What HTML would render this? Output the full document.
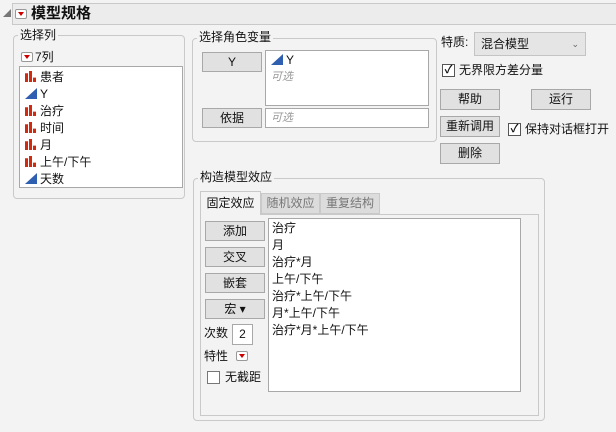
<!DOCTYPE html>
<html><head><meta charset="utf-8"><style>
*{margin:0;padding:0;box-sizing:border-box}
body{width:616px;height:432px;background:#f3f3f3;font-family:"Liberation Sans","Noto Sans CJK SC",sans-serif;font-size:12px;color:#111;position:relative;overflow:hidden}
.a{position:absolute}
.grp{position:absolute;border:1px solid #c9c9c9;border-radius:4px}
.lbl{position:absolute;background:#f3f3f3;padding:0 2px;line-height:14px}
.btn{position:absolute;background:#e1e1e1;border:1px solid #a8a8a8;text-align:center;line-height:18px;font-size:12px}
.box{position:absolute;background:#fff;border:1px solid #a8a8a8}
.rb{position:absolute;width:12px;height:10px;border:1px solid #999;border-radius:2px;background:#fff}
.rb:after{content:"";position:absolute;left:2px;top:2px;border-left:3px solid transparent;border-right:3px solid transparent;border-top:4px solid #c00}
.it{position:absolute;left:5px;line-height:17px;white-space:nowrap}
.bar{display:inline-block;width:11px;height:11px;vertical-align:-1px;margin-right:4px;background:linear-gradient(to right,#d02a10 0 3px,transparent 3px 4px,#d02a10 4px 7px,transparent 7px 8px,#d02a10 8px 11px);clip-path:polygon(0 20%,3px 20%,3px 0,7px 0,7px 45%,8px 45%,8px 60%,11px 60%,11px 100%,0 100%)}
.tri{display:inline-block;width:12px;height:11px;vertical-align:-1px;margin-right:3px;background:#2f5fb0;clip-path:polygon(0 100%,100% 0,100% 100%)}
.cb{position:absolute;width:13px;height:13px;border:1px solid #555;background:#fff;font-size:11px;line-height:11px;text-align:center;font-weight:bold}
</style></head><body>
<div class="a" style="left:3px;top:9px;width:0;height:0;border-left:8px solid transparent;border-bottom:8px solid #777"></div>
<div class="a" style="left:12px;top:3px;width:604px;height:22px;background:#ececec;border:1px solid #c9c9c9;border-right:none"></div>
<div class="rb" style="left:15px;top:9px"></div>
<div class="a" style="left:31px;top:4px;font-size:15px;font-weight:bold;line-height:20px">模型规格</div>

<div class="grp" style="left:13px;top:35px;width:172px;height:164px"></div>
<div class="lbl" style="left:18px;top:28px">选择列</div>
<div class="rb" style="left:21px;top:52px"></div>
<div class="a" style="left:35px;top:50px;line-height:14px">7列</div>
<div class="box" style="left:19px;top:66px;width:164px;height:122px">
<div class="it" style="top:2px"><span class="bar"></span>患者</div>
<div class="it" style="top:19px"><span class="tri"></span>Y</div>
<div class="it" style="top:36px"><span class="bar"></span>治疗</div>
<div class="it" style="top:53px"><span class="bar"></span>时间</div>
<div class="it" style="top:70px"><span class="bar"></span>月</div>
<div class="it" style="top:87px"><span class="bar"></span>上午/下午</div>
<div class="it" style="top:104px"><span class="tri"></span>天数</div>
</div>

<div class="grp" style="left:192px;top:38px;width:245px;height:104px"></div>
<div class="lbl" style="left:197px;top:30px">选择角色变量</div>
<div class="btn" style="left:202px;top:52px;width:60px;height:20px">Y</div>
<div class="box" style="left:265px;top:50px;width:164px;height:56px">
<div class="it" style="top:1px"><span class="tri"></span>Y</div>
<div class="it" style="top:18px;color:#999;font-style:italic;font-size:11px">可选</div></div>
<div class="btn" style="left:202px;top:108px;width:60px;height:20px">依据</div>
<div class="box" style="left:265px;top:108px;width:164px;height:20px"><div class="it" style="top:1px;color:#999;font-style:italic;font-size:11px">可选</div></div>

<div class="a" style="left:441px;top:34px;line-height:16px">特质:</div>
<div class="a" style="left:474px;top:32px;width:112px;height:24px;background:#e5e5e5;border:1px solid #c4c4c4;line-height:22px;padding-left:6px">混合模型<span style="position:absolute;right:6px;font-size:9px;color:#666">⌄</span></div>
<div class="cb" style="left:442px;top:64px">✓</div>
<div class="a" style="left:459px;top:62px;line-height:16px">无界限方差分量</div>
<div class="btn" style="left:440px;top:89px;width:60px;height:21px">帮助</div>
<div class="btn" style="left:531px;top:89px;width:60px;height:21px">运行</div>
<div class="btn" style="left:440px;top:116px;width:60px;height:21px">重新调用</div>
<div class="cb" style="left:508px;top:123px">✓</div>
<div class="a" style="left:525px;top:121px;line-height:16px">保持对话框打开</div>
<div class="btn" style="left:440px;top:143px;width:60px;height:21px">删除</div>

<div class="grp" style="left:193px;top:178px;width:352px;height:243px"></div>
<div class="lbl" style="left:198px;top:170px">构造模型效应</div>
<div class="a" style="left:200px;top:214px;width:339px;height:202px;background:#f3f3f3;border:1px solid #c9c9c9"></div>
<div class="a" style="left:200px;top:191px;width:61px;height:24px;background:#f3f3f3;border:1px solid #c9c9c9;border-bottom:none;text-align:center;line-height:22px">固定效应</div>
<div class="a" style="left:261px;top:193px;width:59px;height:21px;background:#dcdcdc;border:1px solid #c9c9c9;text-align:center;line-height:19px;color:#777">随机效应</div>
<div class="a" style="left:320px;top:193px;width:60px;height:21px;background:#dcdcdc;border:1px solid #c9c9c9;text-align:center;line-height:19px;color:#777">重复结构</div>
<div class="btn" style="left:205px;top:221px;width:60px;height:20px">添加</div>
<div class="btn" style="left:205px;top:247px;width:60px;height:20px">交叉</div>
<div class="btn" style="left:205px;top:273px;width:60px;height:20px">嵌套</div>
<div class="btn" style="left:205px;top:299px;width:60px;height:20px">宏 ▾</div>
<div class="a" style="left:204px;top:325px;line-height:16px">次数</div>
<div class="box" style="left:232px;top:324px;width:21px;height:21px;text-align:center;line-height:19px">2</div>
<div class="a" style="left:204px;top:348px;line-height:16px">特性</div>
<div class="rb" style="left:236px;top:351px"></div>
<div class="cb" style="left:207px;top:371px;border-color:#777"></div>
<div class="a" style="left:225px;top:369px;line-height:16px">无截距</div>
<div class="box" style="left:268px;top:218px;width:253px;height:174px">
<div class="it" style="left:3px;top:1px">治疗</div>
<div class="it" style="left:3px;top:18px">月</div>
<div class="it" style="left:3px;top:35px">治疗*月</div>
<div class="it" style="left:3px;top:52px">上午/下午</div>
<div class="it" style="left:3px;top:69px">治疗*上午/下午</div>
<div class="it" style="left:3px;top:86px">月*上午/下午</div>
<div class="it" style="left:3px;top:103px">治疗*月*上午/下午</div>
</div>
</body></html>
